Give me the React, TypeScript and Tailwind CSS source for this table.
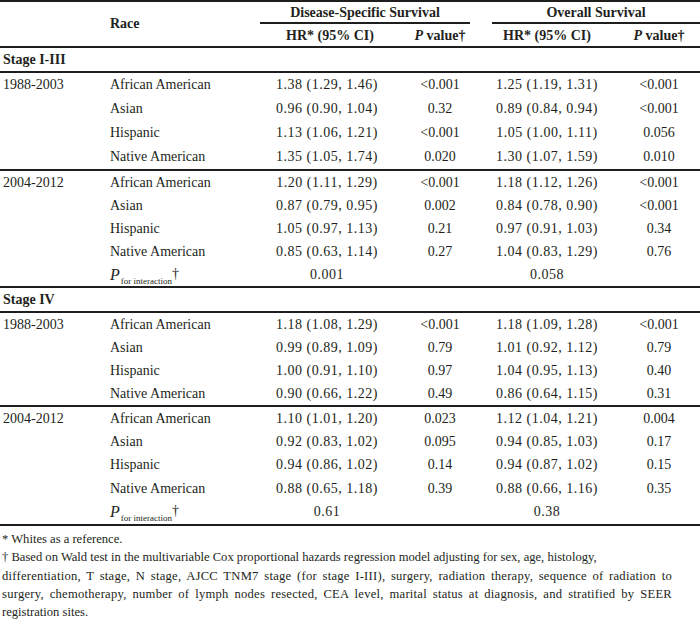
import React from "react";

type Row = {
  period?: string;
  race: string;
  dHr: string;
  dP: string;
  oHr: string;
  oP: string;
};

const COLS = "grid grid-cols-[108px_152px_134px_92px_122px_92px]";

const STAGE_1: Row[][] = [
  [
    { period: "1988-2003", race: "African American", dHr: "1.38 (1.29, 1.46)", dP: "<0.001", oHr: "1.25 (1.19, 1.31)", oP: "<0.001" },
    { race: "Asian", dHr: "0.96 (0.90, 1.04)", dP: "0.32", oHr: "0.89 (0.84, 0.94)", oP: "<0.001" },
    { race: "Hispanic", dHr: "1.13 (1.06, 1.21)", dP: "<0.001", oHr: "1.05 (1.00, 1.11)", oP: "0.056" },
    { race: "Native American", dHr: "1.35 (1.05, 1.74)", dP: "0.020", oHr: "1.30 (1.07, 1.59)", oP: "0.010" },
  ],
  [
    { period: "2004-2012", race: "African American", dHr: "1.20 (1.11, 1.29)", dP: "<0.001", oHr: "1.18 (1.12, 1.26)", oP: "<0.001" },
    { race: "Asian", dHr: "0.87 (0.79, 0.95)", dP: "0.002", oHr: "0.84 (0.78, 0.90)", oP: "<0.001" },
    { race: "Hispanic", dHr: "1.05 (0.97, 1.13)", dP: "0.21", oHr: "0.97 (0.91, 1.03)", oP: "0.34" },
    { race: "Native American", dHr: "0.85 (0.63, 1.14)", dP: "0.27", oHr: "1.04 (0.83, 1.29)", oP: "0.76" },
  ],
];

const STAGE_4: Row[][] = [
  [
    { period: "1988-2003", race: "African American", dHr: "1.18 (1.08, 1.29)", dP: "<0.001", oHr: "1.18 (1.09, 1.28)", oP: "<0.001" },
    { race: "Asian", dHr: "0.99 (0.89, 1.09)", dP: "0.79", oHr: "1.01 (0.92, 1.12)", oP: "0.79" },
    { race: "Hispanic", dHr: "1.00 (0.91, 1.10)", dP: "0.97", oHr: "1.04 (0.95, 1.13)", oP: "0.40" },
    { race: "Native American", dHr: "0.90 (0.66, 1.22)", dP: "0.49", oHr: "0.86 (0.64, 1.15)", oP: "0.31" },
  ],
  [
    { period: "2004-2012", race: "African American", dHr: "1.10 (1.01, 1.20)", dP: "0.023", oHr: "1.12 (1.04, 1.21)", oP: "0.004" },
    { race: "Asian", dHr: "0.92 (0.83, 1.02)", dP: "0.095", oHr: "0.94 (0.85, 1.03)", oP: "0.17" },
    { race: "Hispanic", dHr: "0.94 (0.86, 1.02)", dP: "0.14", oHr: "0.94 (0.87, 1.02)", oP: "0.15" },
    { race: "Native American", dHr: "0.88 (0.65, 1.18)", dP: "0.39", oHr: "0.88 (0.66, 1.16)", oP: "0.35" },
  ],
];

function DataRow({ r, h }: { r: Row; h: string }) {
  return (
    <div className={`${COLS} ${h} items-center`}>
      <div className="pl-[3px]">{r.period}</div>
      <div className="pl-[2px]">{r.race}</div>
      <div className="text-center tracking-[0.5px]">{r.dHr}</div>
      <div className="text-center">{r.dP}</div>
      <div className="text-center tracking-[0.5px]">{r.oHr}</div>
      <div className="text-center pl-[10px]">{r.oP}</div>
    </div>
  );
}

function Interaction({ d, o, h }: { d: string; o: string; h: string }) {
  return (
    <div className={`${COLS} ${h} items-center`}>
      <div />
      <div className="pl-[2px] flex items-baseline">
        <span className="italic text-[16px]">P</span>
        <span className="text-[9px] relative top-[4px] ml-[1px]">for interaction</span>
        <span className="relative -top-[2px]">†</span>
      </div>
      <div className="text-center tracking-[0.5px]">{d}</div>
      <div />
      <div className="text-center tracking-[0.5px]">{o}</div>
      <div />
    </div>
  );
}

function Stage({ title }: { title: string }) {
  return (
    <div className="h-[25px] flex items-center pl-[3px] font-bold border-b-2 border-[#1e1e1e]">{title}</div>
  );
}

function Group({ rows, h, interaction }: { rows: Row[]; h: string; interaction?: [string, string] }) {
  return (
    <div className="border-b-2 border-[#1e1e1e]">
      {rows.map((r, i) => (
        <DataRow key={i} r={r} h={h} />
      ))}
      {interaction && <Interaction d={interaction[0]} o={interaction[1]} h={h} />}
    </div>
  );
}

export default function App() {
  return (
    <div className="w-[700px] h-[624px] bg-white text-[#231f20] text-[14px] leading-none font-['Liberation_Serif',serif] overflow-hidden">
      <div className="border-t-2 border-[#1e1e1e]">
        {/* header */}
        <div className={`${COLS} grid-rows-[22px_22px] border-b-2 border-[#1e1e1e] font-bold`}>
          <div className="row-span-2" />
          <div className="row-span-2 pl-[2px] flex items-center">Race</div>
          <div className="col-span-2 mr-[16px] flex items-center justify-center border-b-2 border-[#1e1e1e] pt-[2px]">
            Disease-Specific Survival
          </div>
          <div className="col-span-2 ml-[6px] flex items-center justify-center border-b-2 border-[#1e1e1e] pt-[2px]">
            Overall Survival
          </div>
          <div className="flex items-center justify-center pl-[6px] pt-[1px]">HR* (95% CI)</div>
          <div className="flex items-center justify-center pt-[1px]">
            <span className="italic">P</span>&nbsp;value†
          </div>
          <div className="flex items-center justify-center pt-[1px]">HR* (95% CI)</div>
          <div className="flex items-center justify-center pl-[10px] pt-[1px]">
            <span className="italic">P</span>&nbsp;value†
          </div>
        </div>

        <Stage title="Stage I-III" />
        <Group rows={STAGE_1[0]} h="h-[24px]" />
        <Group rows={STAGE_1[1]} h="h-[23px]" interaction={["0.001", "0.058"]} />

        <Stage title="Stage IV" />
        <Group rows={STAGE_4[0]} h="h-[23px]" />
        <Group rows={STAGE_4[1]} h="h-[23.4px]" interaction={["0.61", "0.38"]} />
      </div>

      <div className="pl-[2px] pt-[4px] text-[12.6px] leading-[18.3px] whitespace-nowrap">
        <div>* Whites as a reference.</div>
        <div>† Based on Wald test in the multivariable Cox proportional hazards regression model adjusting for sex, age, histology,</div>
        <div className="w-[670px] tracking-[0.25px] text-justify [text-align-last:justify]">
          differentiation, T stage, N stage, AJCC TNM7 stage (for stage I-III), surgery, radiation therapy, sequence of radiation to
        </div>
        <div className="w-[670px] tracking-[0.25px] text-justify [text-align-last:justify]">
          surgery, chemotherapy, number of lymph nodes resected, CEA level, marital status at diagnosis, and stratified by SEER
        </div>
        <div>registration sites.</div>
      </div>
    </div>
  );
}
